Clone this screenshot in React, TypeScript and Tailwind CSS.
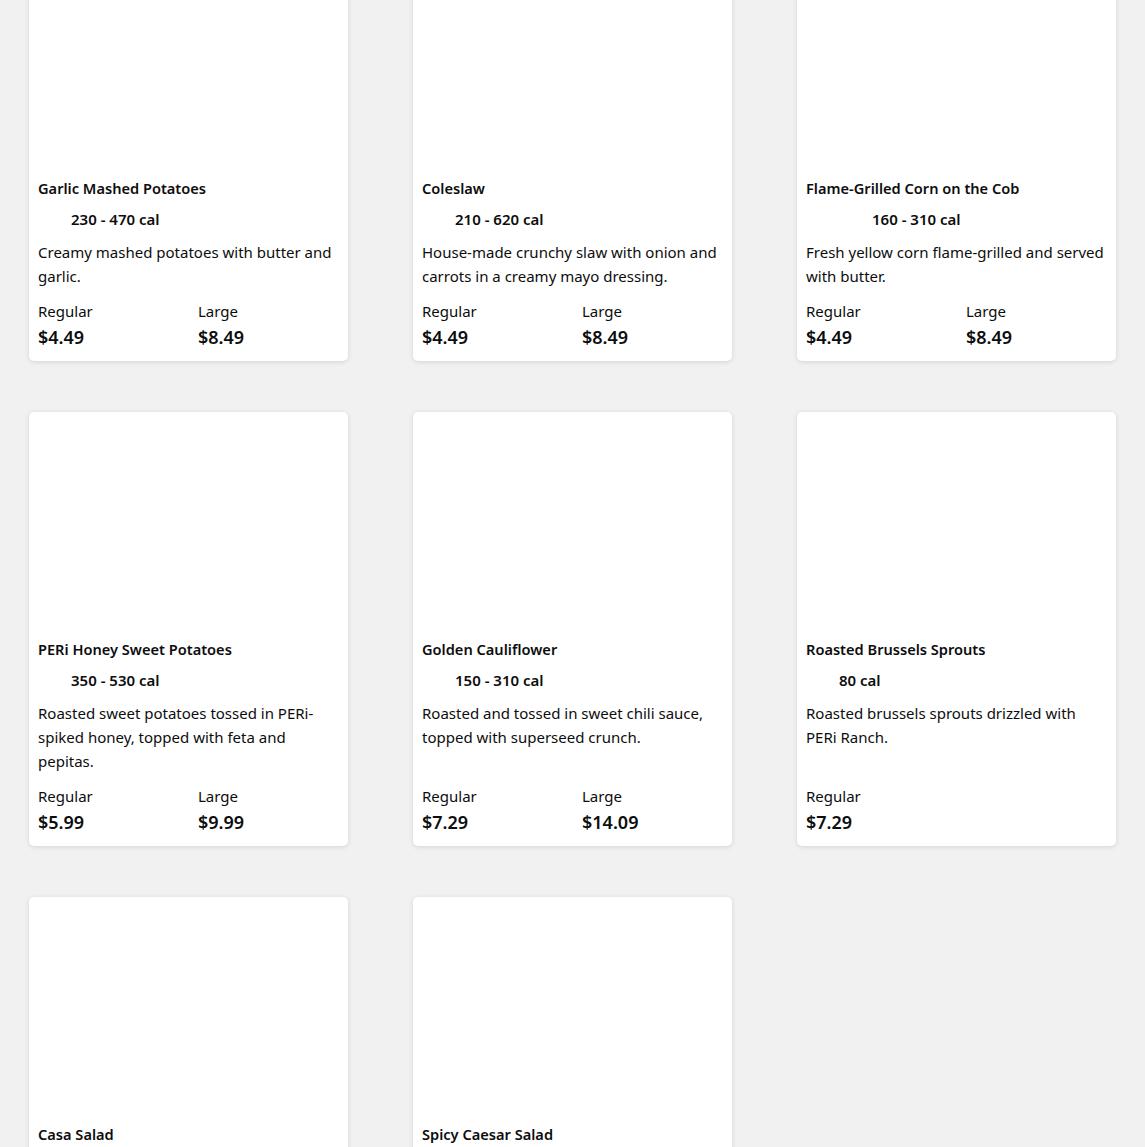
import React from 'react';

type Item = {
  name: string;
  cal: string;
  icons: number;
  desc: string;
  prices: { label: string; value: string }[];
};

const items: Item[] = [
  {
    name: 'Garlic Mashed Potatoes',
    cal: '230 - 470 cal',
    icons: 1,
    desc: 'Creamy mashed potatoes with butter and garlic.',
    prices: [
      { label: 'Regular', value: '$4.49' },
      { label: 'Large', value: '$8.49' },
    ],
  },
  {
    name: 'Coleslaw',
    cal: '210 - 620 cal',
    icons: 1,
    desc: 'House-made crunchy slaw with onion and carrots in a creamy mayo dressing.',
    prices: [
      { label: 'Regular', value: '$4.49' },
      { label: 'Large', value: '$8.49' },
    ],
  },
  {
    name: 'Flame-Grilled Corn on the Cob',
    cal: '160 - 310 cal',
    icons: 2,
    desc: 'Fresh yellow corn flame-grilled and served with butter.',
    prices: [
      { label: 'Regular', value: '$4.49' },
      { label: 'Large', value: '$8.49' },
    ],
  },
  {
    name: 'PERi Honey Sweet Potatoes',
    cal: '350 - 530 cal',
    icons: 1,
    desc: 'Roasted sweet potatoes tossed in PERi-spiked honey, topped with feta and pepitas.',
    prices: [
      { label: 'Regular', value: '$5.99' },
      { label: 'Large', value: '$9.99' },
    ],
  },
  {
    name: 'Golden Cauliflower',
    cal: '150 - 310 cal',
    icons: 1,
    desc: 'Roasted and tossed in sweet chili sauce, topped with superseed crunch.',
    prices: [
      { label: 'Regular', value: '$7.29' },
      { label: 'Large', value: '$14.09' },
    ],
  },
  {
    name: 'Roasted Brussels Sprouts',
    cal: '80 cal',
    icons: 1,
    desc: 'Roasted brussels sprouts drizzled with PERi Ranch.',
    prices: [{ label: 'Regular', value: '$7.29' }],
  },
  {
    name: 'Casa Salad',
    cal: '',
    icons: 0,
    desc: '',
    prices: [],
  },
  {
    name: 'Spicy Caesar Salad',
    cal: '',
    icons: 0,
    desc: '',
    prices: [],
  },
];

const MenuCard = ({ item }: { item: Item }) => (
  <div className="flex flex-col rounded-[5px] bg-white shadow-[0_1px_5px_rgba(0,0,0,0.12)]">
    {/* image slot (empty) */}
    <div className="h-[217px]" />
    <div className="flex flex-1 flex-col pb-[11px] pl-[9px] pr-[10px] pt-[10px]">
      <h3 className="text-[14.6px] font-semibold leading-[20px]">{item.name}</h3>
      <div className="mt-[9px] flex items-center text-[15px] font-semibold leading-[24px]">
        {Array.from({ length: item.icons }).map((_, i) => (
          <span key={i} className="inline-block w-[33px]" />
        ))}
        <span>{item.cal}</span>
      </div>
      <p className="mt-[9px] flex-1 text-[15px] leading-[24px]">{item.desc}</p>
      <div className="mt-[11px] flex">
        {item.prices.map((p) => (
          <div key={p.label} className="w-[160px] shrink-0">
            <div className="text-[15px] leading-[24px]">{p.label}</div>
            <div className="mt-[1px] text-[18px] font-semibold leading-[26px]">{p.value}</div>
          </div>
        ))}
      </div>
    </div>
  </div>
);

export default function App() {
  return (
    <div className="min-h-screen overflow-hidden bg-[#f1f1f1] font-['Noto_Sans',sans-serif] text-[#0d0d0d]">
      <div className="mt-[-49px] grid grid-cols-3 gap-x-[65px] gap-y-[51px] pb-10 pl-[29px] pr-[29px]">
        {items.map((item) => (
          <MenuCard key={item.name} item={item} />
        ))}
      </div>
    </div>
  );
}
